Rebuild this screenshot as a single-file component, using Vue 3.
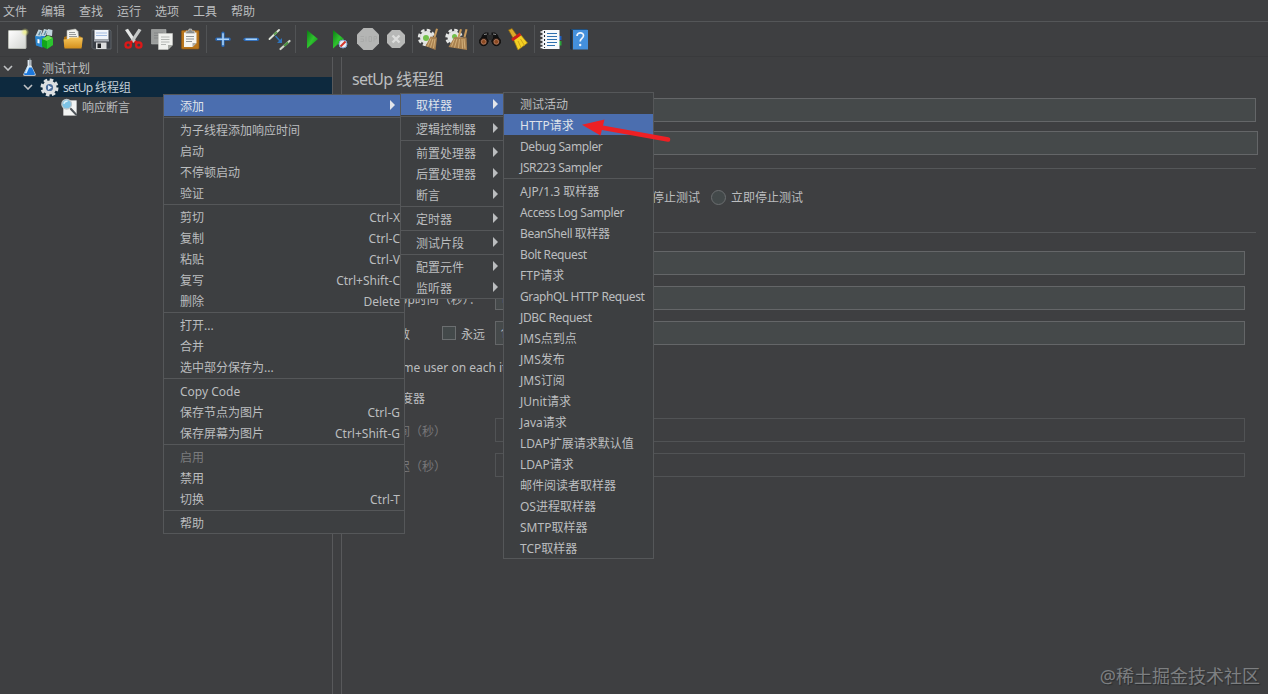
<script setup>
const menus = ['文件', '编辑', '查找', '运行', '选项', '工具', '帮助'];

const toolGroups = [
  ['new', 'templates', 'open', 'save'],
  ['cut', 'copy', 'paste'],
  ['plus', 'minus', 'toggle'],
  ['play', 'play-now', 'stop', 'shutdown'],
  ['clear', 'clear-all'],
  ['search', 'broom'],
  ['functions', 'help']
];

// each inner array is a block between two separators
const contextMenu = [
  [{ label: '添加', sub: true, active: true }],
  [
    { label: '为子线程添加响应时间' },
    { label: '启动' },
    { label: '不停顿启动' },
    { label: '验证' }
  ],
  [
    { label: '剪切', key: 'Ctrl-X' },
    { label: '复制', key: 'Ctrl-C' },
    { label: '粘贴', key: 'Ctrl-V' },
    { label: '复写', key: 'Ctrl+Shift-C' },
    { label: '删除', key: 'Delete' }
  ],
  [{ label: '打开...' }, { label: '合并' }, { label: '选中部分保存为...' }],
  [
    { label: 'Copy Code' },
    { label: '保存节点为图片', key: 'Ctrl-G' },
    { label: '保存屏幕为图片', key: 'Ctrl+Shift-G' }
  ],
  [
    { label: '启用', disabled: true },
    { label: '禁用' },
    { label: '切换', key: 'Ctrl-T' }
  ],
  [{ label: '帮助' }]
];

const addMenu = [
  [{ label: '取样器', sub: true, active: true }],
  [{ label: '逻辑控制器', sub: true }],
  [
    { label: '前置处理器', sub: true },
    { label: '后置处理器', sub: true },
    { label: '断言', sub: true }
  ],
  [{ label: '定时器', sub: true }],
  [{ label: '测试片段', sub: true }],
  [{ label: '配置元件', sub: true }, { label: '监听器', sub: true }]
];

const samplerMenu = [
  [
    { label: '测试活动' },
    { label: 'HTTP请求', active: true },
    { label: 'Debug Sampler' },
    { label: 'JSR223 Sampler' }
  ],
  [
    { label: 'AJP/1.3 取样器' },
    { label: 'Access Log Sampler' },
    { label: 'BeanShell 取样器' },
    { label: 'Bolt Request' },
    { label: 'FTP请求' },
    { label: 'GraphQL HTTP Request' },
    { label: 'JDBC Request' },
    { label: 'JMS点到点' },
    { label: 'JMS发布' },
    { label: 'JMS订阅' },
    { label: 'JUnit请求' },
    { label: 'Java请求' },
    { label: 'LDAP扩展请求默认值' },
    { label: 'LDAP请求' },
    { label: '邮件阅读者取样器' },
    { label: 'OS进程取样器' },
    { label: 'SMTP取样器' },
    { label: 'TCP取样器' }
  ]
];

const popups = [
  { name: 'context', blocks: contextMenu },
  { name: 'add', blocks: addMenu },
  { name: 'sampler', blocks: samplerMenu }
];

// labels with whole latin words are set a bit tighter
const isWordy = (label) => /[a-z]{4}/.test(label);
</script>

<template>
  <div class="window">
    <svg class="sprite" width="0" height="0">
      <defs>
        <linearGradient id="g-green" x1="0" y1="0" x2="1" y2="1">
          <stop offset="0" stop-color="#0a7d12" />
          <stop offset="0.5" stop-color="#2fc22f" />
          <stop offset="1" stop-color="#0a8a14" />
        </linearGradient>
        <linearGradient id="g-paper" x1="0" y1="0" x2="1" y2="1">
          <stop offset="0" stop-color="#ffffff" />
          <stop offset="1" stop-color="#d2d4d0" />
        </linearGradient>
        <linearGradient id="g-folder" x1="0" y1="0" x2="0" y2="1">
          <stop offset="0" stop-color="#f6c65a" />
          <stop offset="1" stop-color="#d38f1c" />
        </linearGradient>
        <radialGradient id="g-glow">
          <stop offset="0" stop-color="#f4f58a" />
          <stop offset="1" stop-color="#e5ea7a" stop-opacity="0" />
        </radialGradient>
      </defs>

      <symbol id="i-new" viewBox="0 0 24 24">
        <rect x="3.5" y="3.5" width="17.5" height="18" rx="0.6" fill="url(#g-paper)" stroke="#b9bcb4" />
        <circle cx="20" cy="5.2" r="4.2" fill="url(#g-glow)" />
      </symbol>

      <symbol id="i-templates" viewBox="0 0 24 24">
        <path d="M2 9l6-2 4 2v10l-3 1.500-6-2z" fill="#2a86cf" />
        <path d="M2.500 9l3-6.500 4 1-2 6zM8 9l3-7 4 1-2.500 6zM13.500 8l1.500-6 4.500 1-.5 6z" fill="#c3d6df" />
        <path d="M5 8l2-4 1 .5-1.500 4zM10.500 8l2-4.500 1 .5-1.500 4z" fill="#5c8aa2" />
        <path d="M4.500 12l2 .6v4l-2-.6z" fill="#fff" />
        <path d="M9 12l6-3.500 5 2.500v7l-6 4-5-2.500z" fill="#12a51c" />
        <path d="M9 12l6-3.500 5 2.500-6 3z" fill="#6ee052" />
        <path d="M14 14l6-3v7l-6 4z" fill="#2cc42f" />
      </symbol>

      <symbol id="i-open" viewBox="0 0 24 24">
        <path d="M3 10l3-1h13l2 2v9H3z" fill="#a86d10" />
        <path d="M6 3.500l8.500-1.500 2.500 2.500 1 9H6z" fill="#f2f3ef" stroke="#b5b7b0" stroke-width="0.6" />
        <path d="M8 5.500h6M8 7.500h7M8 9.500h8" stroke="#8d9190" stroke-width="0.900" />
        <path d="M2.500 12.500l5-.5 1.500-1.500h12.500l.3 1-1.300 10H3.500z" fill="url(#g-folder)" />
      </symbol>

      <symbol id="i-save" viewBox="0 0 24 24">
        <path d="M3 3h18l1 1v18H4.500L3 20.500z" fill="#3c4148" stroke="#6d7278" stroke-width="0.700" />
        <rect x="5.500" y="3" width="14" height="9.500" fill="#f0f4fa" />
        <path d="M7 6h11M7 8.500h11" stroke="#a2bbe0" stroke-width="1" />
        <rect x="5" y="12.500" width="15" height="2" fill="#aab0b8" />
        <rect x="7" y="15.500" width="10.500" height="6.500" fill="#dcdedf" />
        <rect x="8.500" y="16.500" width="3.500" height="4.500" fill="#202327" />
      </symbol>

      <symbol id="i-cut" viewBox="0 0 24 24">
        <path d="M3 3l3-1.300 8 12-2.500 2z" fill="#e6e8e7" />
        <path d="M19.500 3l-3-1.300-8 12 2.500 2z" fill="#c5c8c7" />
        <path d="M10.500 14.500l-2.500 1M12.500 14.500l2.500 1" stroke="#d01414" stroke-width="2.600" />
        <circle cx="6.200" cy="18" r="2.700" fill="none" stroke="#dc1818" stroke-width="2.300" />
        <circle cx="16.800" cy="18" r="2.700" fill="none" stroke="#dc1818" stroke-width="2.300" />
      </symbol>

      <symbol id="i-copy" viewBox="0 0 24 24">
        <path d="M1.500 2.500H16V17H1.500z" fill="#9b9d9c" stroke="#b4b6b5" stroke-width="0.600" />
        <path d="M4 6h9M4 8.500h5M4 11h5" stroke="#858788" />
        <path d="M8.500 6.500H22.500V18l-4.500 4.500H8.500z" fill="#f0f1ee" stroke="#c9cbc6" stroke-width="0.600" />
        <path d="M11 10h8.500M11 12.500h8.500M11 15h8.500M11 17.500h5" stroke="#b4b7b4" />
        <path d="M22.500 18H18v4.500z" fill="#a6a9a4" />
      </symbol>

      <symbol id="i-paste" viewBox="0 0 24 24">
        <rect x="3.500" y="3.500" width="17.500" height="18.500" rx="1" fill="#b9761c" stroke="#8f5710" stroke-width="0.600" />
        <path d="M6 5.500h12.500V16L14.500 20H6z" fill="#f5f5f1" />
        <path d="M18.500 16h-4v4z" fill="#a9aaa5" />
        <path d="M8 9.500h8M8 12h8M8 14.500h6" stroke="#8f9495" />
        <path d="M8 6.500V4h2.500l.5-2h2.500l.5 2h2.500v2.500z" fill="#8a8d8b" stroke="#d8d9d6" stroke-width="0.600" />
      </symbol>

      <symbol id="i-plus" viewBox="0 0 24 24">
        <path d="M12 6v12.500M5.800 12.200h12.400" stroke="#2b6ab8" stroke-width="3.200" stroke-linecap="round" />
        <path d="M12 6.200v12M6 12.200h12" stroke="#a9d2f8" stroke-width="1.600" />
      </symbol>

      <symbol id="i-minus" viewBox="0 0 24 24">
        <path d="M6 12.300h12.500" stroke="#2b6ab8" stroke-width="3.200" stroke-linecap="round" />
        <path d="M6.500 12.300h11.500" stroke="#a9d2f8" stroke-width="1.600" />
      </symbol>

      <symbol id="i-toggle" viewBox="0 0 24 24">
        <path d="M2.500 12L12 3" stroke="#dfe5da" stroke-width="1.900" stroke-linecap="round" />
        <path d="M7 7.800L10 5" stroke="#5f9e52" stroke-width="1.900" />
        <path d="M13.500 22L22.500 14" stroke="#cfd6ca" stroke-width="2.200" stroke-linecap="round" />
        <path d="M17 19L21 15.400" stroke="#4d9443" stroke-width="2.200" />
        <path d="M8.500 9l4.500 5" stroke="#2f74bb" stroke-width="1.500" />
        <path d="M15 11v5h-5z" fill="#2f74bb" />
      </symbol>

      <symbol id="i-play" viewBox="0 0 24 24">
        <path d="M7 3l11 9-11 9.500z" fill="url(#g-green)" />
      </symbol>

      <symbol id="i-play-now" viewBox="0 0 24 24">
        <path d="M5 3l11 9-11 9.500z" fill="url(#g-green)" />
        <circle cx="15" cy="17" r="4" fill="#e8ecf2" stroke="#7fa3cf" />
        <path d="M12.500 19.500l5-5" stroke="#d3342a" stroke-width="1.900" />
      </symbol>

      <symbol id="i-stop" viewBox="0 0 24 24">
        <path d="M7.500 1h9L23 7.500v9L16.500 23h-9L1 16.500v-9z" fill="#b4b5b4" />
        <path d="M4.500 9.500h3.500M4.500 12h3v2.500h-3M10 9.500v5M13 9.500h2.500v5H13zM18 14.500v-5h2.500v2.500H18" fill="none" stroke="#a9aaa9" />
      </symbol>

      <symbol id="i-shutdown" viewBox="0 0 24 24">
        <path d="M8 3h8l5 5v8l-5 5H8l-5-5V8z" fill="#b7b8b7" />
        <path d="M8.500 8.500l7 7M15.500 8.500l-7 7" stroke="#dcdddc" stroke-width="2.400" />
      </symbol>

      <symbol id="i-clear" viewBox="0 0 24 24">
        <circle cx="9.500" cy="10.500" r="6.500" fill="#e4e6e4" />
        <circle cx="9.500" cy="10.500" r="7.400" fill="none" stroke="#e4e6e4" stroke-width="2.600" stroke-dasharray="3.600 2.210" />
        <circle cx="9" cy="11" r="3" fill="#73c04b" />
        <path d="M19 1.500l2 .5-2.500 8.500-2-.5z" fill="#c79a5c" />
        <path d="M13.500 9.500l6.500 1-1.500 12.500-10-4z" fill="#a9814f" />
        <path d="M14 11.500l-3.500 8M16 12l-2.500 8.500M18 12l-1.500 9" stroke="#dcbb86" stroke-width="0.800" />
      </symbol>

      <symbol id="i-clear-all" viewBox="0 0 24 24">
        <circle cx="9" cy="10.500" r="6.500" fill="#e4e6e4" />
        <circle cx="9" cy="10.500" r="7.400" fill="none" stroke="#e4e6e4" stroke-width="2.600" stroke-dasharray="3.600 2.210" />
        <circle cx="9.500" cy="9.500" r="2.500" fill="#73c04b" />
        <path d="M15 2l2 .5-2.500 8-2-.5zM20.500 2l2 .5-2 8-2-.5z" fill="#c79a5c" />
        <path d="M9.500 10l12 .5.5 12.500L3.500 20z" fill="#a9814f" />
        <path d="M9.500 12l-3 7.500M12 12l-2.500 8.500M14.500 12l-1 9M17 12l.5 9.500M19 12l1 9.500" stroke="#dcbb86" stroke-width="0.800" />
      </symbol>

      <symbol id="i-search" viewBox="0 0 24 24">
        <path d="M4 8l3-2.500h3.500V15H2zM20 8l-3-2.500h-3.500V15H22z" fill="#131313" />
        <rect x="9" y="8" width="6" height="5" fill="#2b2b2b" />
        <path d="M6 7.500l3-.5M15 7l3 .5" stroke="#8b8b8b" />
        <circle cx="5.700" cy="14.500" r="4.200" fill="#2b1c14" stroke="#0d0d0d" />
        <circle cx="18.300" cy="14.500" r="4.200" fill="#2b1c14" stroke="#0d0d0d" />
        <circle cx="5.700" cy="14.800" r="2.400" fill="#8c4a22" stroke="#c4876a" stroke-width="0.800" />
        <circle cx="18.300" cy="14.800" r="2.400" fill="#8c4a22" stroke="#c4876a" stroke-width="0.800" />
      </symbol>

      <symbol id="i-broom" viewBox="0 0 24 24">
        <path d="M2.500 3l3.500-1.500 5 7-4 2.500z" fill="#dba92a" stroke="#8a6410" stroke-width="0.700" />
        <path d="M7.500 12.500l7-5L21.500 16 12 23z" fill="#f3cf22" stroke="#a07d12" stroke-width="0.700" />
        <path d="M12 14l3 6.500M14.500 12l4 6.500" stroke="#c79d17" stroke-width="0.900" />
        <path d="M6 13l8.500-6" stroke="#cc1f1a" stroke-width="2.800" />
      </symbol>

      <symbol id="i-functions" viewBox="0 0 24 24">
        <path d="M19 9h3.500v4H19z" fill="#1e5fc0" />
        <path d="M19 14h3.500v4.500H19z" fill="#27a53a" />
        <rect x="3.500" y="3" width="17" height="19" fill="#f6f8fa" />
        <path d="M8 6.500h10M8 9.500h10M8 12.500h10M8 15.500h10M8 18.500h8" stroke="#2e6fae" stroke-width="1.100" />
        <path d="M1.500 5h4M1.500 9h4M1.500 13h4M1.500 17h4M1.500 20.500h4" stroke="#f6f8fa" stroke-width="1.300" />
        <path d="M5.500 4v17" stroke="#1c2630" stroke-width="1.100" stroke-dasharray="2 2" />
      </symbol>

      <symbol id="i-help" viewBox="0 0 24 24">
        <path d="M3 2l2 1v20l-2-1.500z" fill="#1b3046" />
        <path d="M4 2h16l1 1H5z" fill="#20507f" />
        <rect x="6" y="3" width="15" height="19.500" fill="#4490dc" />
        <path d="M10 9c0-4.300 6.800-4 6.500-.3-.2 2.700-3.300 2.800-3.300 5.800" fill="none" stroke="#eef5fd" stroke-width="1.700" />
        <circle cx="13.200" cy="18" r="1.200" fill="#eef5fd" />
      </symbol>

      <symbol id="i-plan" viewBox="0 0 20 20">
        <path d="M8 2h4v6l4.500 9q.5 1.800-1.500 1.800H5Q3 18.800 3.500 17L8 8z" fill="#dfe9f0" />
        <path d="M7.500 10h5l3.200 6.500q.3 1.500-1.200 1.500h-9Q4 18 4.300 16.500z" fill="#1d78dc" />
        <path d="M7.500 9.500l3-1.500-3.500 8H5z" fill="#d5ecfb" />
        <path d="M10.500.5V8" stroke="#8c9499" stroke-width="1.200" />
      </symbol>

      <symbol id="i-gear" viewBox="0 0 20 20">
        <circle cx="10" cy="10" r="8" fill="none" stroke="#dde0e2" stroke-width="3" stroke-dasharray="3.700 2.583" />
        <circle cx="10" cy="10" r="5.600" fill="#4e6f9c" stroke="#dde0e2" stroke-width="3.600" />
        <path d="M8.500 7.500l4 2.500-4 2.500z" fill="#e8f0fb" />
      </symbol>

      <symbol id="i-assert" viewBox="0 0 20 20">
        <rect x="3.500" y="2.500" width="14" height="16" fill="#f3f4f3" />
        <path d="M11.500 11.500l5.500 6" stroke="#50565b" stroke-width="2.200" stroke-linecap="round" />
        <circle cx="7" cy="6.500" r="5" fill="#7cc3e6" stroke="#b9c5cb" stroke-width="1.500" />
        <path d="M4 6q1-3 4-2.500" fill="none" stroke="#dff3fb" stroke-width="1.500" />
      </symbol>
    </svg>

    <header class="menubar">
      <span v-for="item in menus" :key="item" class="menubar-item">{{ item }}</span>
    </header>

    <div class="toolbar">
      <div v-for="(group, index) in toolGroups" :key="index" class="tool-group">
        <span v-for="name in group" :key="name" class="tool">
          <svg width="24" height="24"><use :href="'#i-' + name" /></svg>
        </span>
      </div>
    </div>

    <main class="content">
      <aside class="tree">
        <div class="node node-root">
          <svg class="chevron" width="10" height="6"><path d="M1 1l4 4 4-4" /></svg>
          <svg class="node-icon" width="19" height="19"><use href="#i-plan" /></svg>
          <span class="node-text">测试计划</span>
        </div>
        <div class="node node-group">
          <svg class="chevron" width="10" height="6"><path d="M1 1l4 4 4-4" /></svg>
          <svg class="node-icon" width="19" height="19"><use href="#i-gear" /></svg>
          <span class="node-text"><span class="latin">setUp </span>线程组</span>
        </div>
        <div class="node node-leaf">
          <svg class="node-icon" width="19" height="19"><use href="#i-assert" /></svg>
          <span class="node-text">响应断言</span>
        </div>
      </aside>

      <div class="splitter"></div>

      <section class="editor">
        <h1 class="title"><span class="latin">setUp </span>线程组</h1>
        <div class="row row-name">
          <label>名称：</label>
          <div class="input"></div>
        </div>
        <div class="row row-comment">
          <label>注释：</label>
          <div class="input"></div>
        </div>
        <div class="panel actions">
          <div class="radio"><i></i>继续</div>
          <div class="radio"><i></i>启动下一进程循环</div>
          <div class="radio"><i></i>停止线程</div>
          <div class="radio"><i></i>停止测试</div>
          <div class="radio"><i></i>立即停止测试</div>
        </div>
        <div class="panel props">
          <div class="field"><label>线程数：</label><div class="input">1</div></div>
          <div class="field"><label>Ramp-Up时间（秒）：</label><div class="input">1</div></div>
          <div class="field">
            <label class="label-loops">循环次数</label>
            <div class="check check-forever"><i></i><span>永远</span></div>
            <div class="input">1</div>
          </div>
          <div class="check check-user"><i></i><span>Same user on each iteration</span></div>
          <div class="check check-scheduler"><i></i><span>调度器</span></div>
          <div class="field disabled"><label>持续时间（秒）</label><div class="input"></div></div>
          <div class="field disabled"><label>启动延迟（秒）</label><div class="input"></div></div>
        </div>
      </section>
    </main>

    <div v-for="popup in popups" :key="popup.name" :class="['popup', 'popup-' + popup.name]">
      <div v-for="(block, index) in popup.blocks" :key="index" class="block">
        <div
          v-for="item in block"
          :key="item.label"
          :class="['item', { active: item.active, 'item-off': item.disabled, wordy: isWordy(item.label) }]"
        >
          <span>{{ item.label }}</span>
          <span v-if="item.key" class="shortcut">{{ item.key }}</span>
          <i v-if="item.sub" class="arrow"></i>
        </div>
      </div>
    </div>

    <svg class="pointer" width="92" height="26" viewBox="0 0 92 26">
      <path d="M20 8.500L87 20.500" />
      <polygon points="1,5.700 23.500,0.500 19.500,16.500" />
    </svg>

    <div class="watermark">@稀土掘金技术社区</div>
  </div>
</template>

<style>
body {
  background: #3e3f41;
  overflow: hidden;
}
</style>

<style scoped>
.window {
  position: relative;
  display: flex;
  flex-direction: column;
  width: 1268px;
  height: 694px;
  overflow: hidden;
  box-sizing: border-box;
  background: #3e3f41;
  color: #bbbdbf;
  font-family: "Noto Sans", "Noto Sans CJK SC", sans-serif;
  font-size: 12px;
  line-height: 20px;
  white-space: nowrap;
}

.sprite {
  position: absolute;
}

.menubar {
  display: flex;
  gap: 14px;
  height: 21px;
  padding-left: 3px;
  line-height: 24px;
  border-bottom: 1px solid #545658;
}

.toolbar {
  display: flex;
  height: 34px;
  padding-left: 3px;
  border-bottom: 1px solid #393a3c;
}

.tool-group {
  display: flex;
  align-items: center;
}

.tool-group + .tool-group::before {
  content: "";
  width: 1px;
  height: 28px;
  margin: 0 2px;
  background: #515355;
}

.tool {
  display: flex;
  justify-content: center;
  width: 28px;
}

.content {
  display: flex;
  flex: 1;
}

.latin {
  letter-spacing: -0.7px;
  white-space: pre;
}

/* test plan tree */
.tree {
  width: 332px;
  padding-top: 1px;
}

.node {
  display: flex;
  align-items: center;
  height: 20px;
  box-sizing: border-box;
}

.node-text {
  padding-top: 2px;
}

.node-root {
  height: 19px;
  padding-left: 3px;
}

.node-group {
  padding-left: 23px;
  background: #0d293e;
  color: #c3cfd8;
}

.node-leaf {
  padding-left: 60px;
}

.chevron {
  margin-right: 7px;
  fill: none;
  stroke: #c0c2c4;
  stroke-width: 1.6;
}

.node-icon {
  margin-right: 4px;
}

.node-root .node-icon,
.node-leaf .node-icon {
  margin-right: 3px;
}

.splitter {
  width: 8px;
  border-left: 1px solid #58595b;
  border-right: 1px solid #58595b;
}

/* right side form */
.editor {
  flex: 1;
  padding: 9px 0 0 10px;
}

.title {
  margin: 0;
  height: 32px;
  font-size: 16px;
  font-weight: 400;
  line-height: 26px;
}

.input {
  flex: 1;
  height: 24px;
  padding-left: 4px;
  box-sizing: border-box;
  border: 1px solid #646668;
  background: #45494a;
  line-height: 24px;
}

.row {
  display: flex;
  align-items: center;
  margin-bottom: 9px;
}

.row label {
  width: 60px;
}

.row-name {
  padding-right: 12px;
}

.row-comment {
  padding-right: 10px;
}

.panel {
  margin-right: 12px;
  border-top: 1px solid #555759;
}

.actions {
  display: flex;
  justify-content: flex-end;
  gap: 11px;
  height: 64px;
  margin-top: 13px;
  padding-right: 453px;
  box-sizing: border-box;
}

.radio {
  display: flex;
  align-items: center;
  height: 57px;
}

.radio i {
  width: 13px;
  height: 13px;
  margin-right: 5px;
  border: 1px solid #6b6e70;
  border-radius: 50%;
  background: #43494a;
}

.props {
  padding: 18px 11px 0 10px;
}

.field {
  display: flex;
  align-items: center;
  height: 24px;
  margin-bottom: 11px;
}

.field label {
  width: 133px;
  padding-top: 3px;
}

.field .label-loops {
  width: 80px;
}

.check {
  display: flex;
  align-items: center;
}

.check i {
  flex-shrink: 0;
  width: 12px;
  height: 12px;
  margin-right: 5px;
  border: 1px solid #6b6e70;
  background: #43494a;
}

.check span {
  padding-top: 3px;
}

.check-forever {
  width: 53px;
}

.check-user,
.check-scheduler {
  height: 20px;
  padding-left: 8px;
}

.check-scheduler {
  margin: 11px 0;
}

.disabled {
  color: #777779;
}

.disabled .input {
  border-color: #515355;
  background: transparent;
}

/* popups */
.popup {
  position: absolute;
  box-sizing: border-box;
  border: 1px solid #555759;
  background: #3d3f41;
}

.popup-context {
  top: 94px;
  left: 163px;
  width: 242px;
}

.popup-add {
  top: 93px;
  left: 400px;
  width: 104px;
}

.popup-sampler {
  top: 92px;
  left: 503px;
  width: 151px;
}

.block + .block {
  position: relative;
  padding-top: 3px;
}

.block + .block::before {
  content: "";
  position: absolute;
  top: 1px;
  left: 0;
  right: 0;
  height: 1px;
  background: #555759;
}

.item {
  display: flex;
  align-items: center;
  justify-content: space-between;
  height: 21px;
  padding: 0 4px 0 16px;
}

.item span {
  padding-top: 2px;
}

.popup-add .item {
  padding: 0 5px 0 15px;
}

.popup-sampler .wordy {
  letter-spacing: -0.4px;
}

.item.active {
  background: #4b6eaf;
  color: #dfe3ea;
}

.item-off {
  color: #7a7b7d;
}

.arrow {
  margin-bottom: 1px;
  border-left: 5px solid #bbbdbf;
  border-top: 5px solid transparent;
  border-bottom: 5px solid transparent;
}

.popup-context .arrow {
  margin-right: 5px;
}

.active .arrow {
  border-left-color: #e4e6ea;
}

.pointer {
  position: absolute;
  top: 119px;
  left: 581px;
  fill: #ee2024;
}

.pointer path {
  stroke: #ee2024;
  stroke-width: 4.6;
  stroke-linecap: round;
}

.watermark {
  position: absolute;
  right: 8px;
  bottom: 6px;
  color: #7d7f81;
  font-size: 18px;
  line-height: 24px;
  text-shadow: 1px 1px 1px #2a2c2e;
}
</style>
